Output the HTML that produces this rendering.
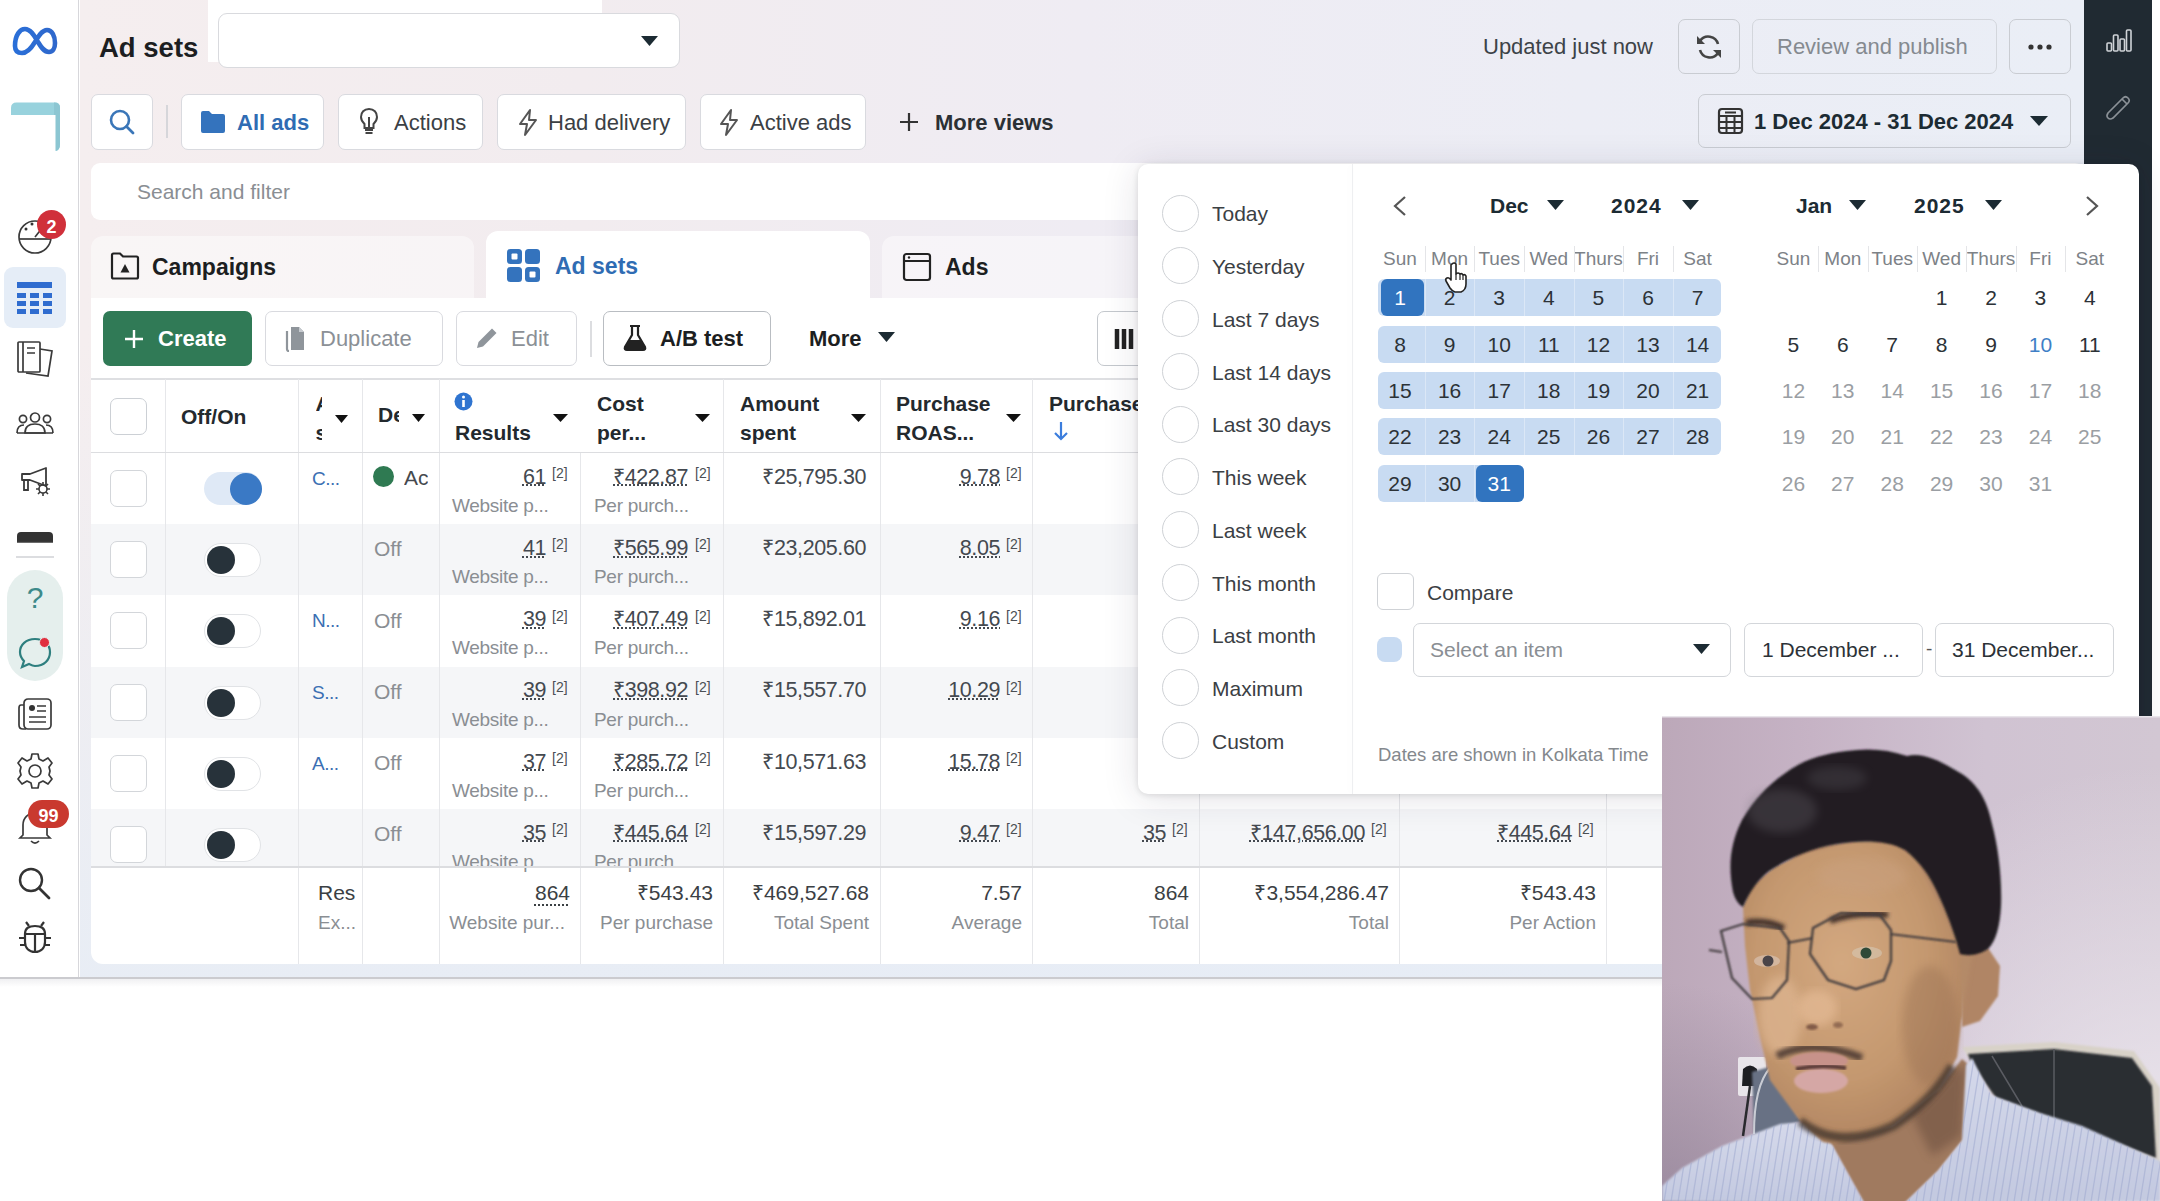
<!DOCTYPE html>
<html><head><meta charset="utf-8"><style>
*{box-sizing:border-box;margin:0;padding:0}
html,body{width:2160px;height:1201px;overflow:hidden;background:#fff;font-family:"Liberation Sans",sans-serif;color:#1c2b33}
.a{position:absolute}
.t{position:absolute;white-space:nowrap;line-height:1}
svg{position:absolute;overflow:visible}
.dot{text-decoration:underline dotted;text-underline-offset:3px;text-decoration-thickness:1.5px}
</style></head><body>
<div class="a" style="left:0px;top:0px;width:2160px;height:1201px;background:#fff"></div>
<div class="a" style="left:80px;top:0px;width:2004px;height:978px;background:linear-gradient(90deg,#f5eeef 0%,#f2ecef 25%,#efecf3 50%,#ecedf5 75%,#eaeef6 100%)"></div>
<div class="a" style="left:80px;top:0px;width:2004px;height:978px;background:linear-gradient(180deg,rgba(232,238,247,0) 0%,rgba(232,238,247,0) 35%,rgba(230,237,246,.85) 100%)"></div>
<div class="a" style="left:0px;top:0px;width:79px;height:978px;background:#fff;border-right:1.5px solid #d7d7db"></div>
<div class="a" style="left:2084px;top:0px;width:68px;height:978px;background:#202a32"></div>
<div class="a" style="left:0px;top:977px;width:2160px;height:2px;background:#cbcbcf"></div>
<div class="a" style="left:0px;top:979px;width:2160px;height:8px;background:linear-gradient(180deg,#f0f0f2,#fff)"></div>
<div class="t" style="left:99.0px;top:33.7px;font-size:27.5px;color:#1c1e21;font-weight:bold;">Ad sets</div>
<div class="a" style="left:208px;top:0px;width:394px;height:62px;background:#fff"></div>
<div class="a" style="left:218px;top:13px;width:462px;height:55px;background:#fff;border:1.5px solid #d9dade;border-radius:9px"></div>
<svg style="left:641px;top:36px;" width="17" height="11" viewBox="0 0 17 11"><path d="M0 0H17L8.5 10Z" fill="#1c2b33"/></svg>
<div class="a" style="left:91px;top:94px;width:62px;height:56px;background:#fff;border:1.5px solid #d9dadf;border-radius:7px"></div>
<svg style="left:108px;top:108px;" width="28" height="28" viewBox="0 0 28 28"><circle cx="12" cy="12" r="9" fill="none" stroke="#3a76b8" stroke-width="2.6"/><path d="M18.5 18.5L25 25" stroke="#3a76b8" stroke-width="2.8" stroke-linecap="round"/></svg>
<div class="a" style="left:166px;top:105px;width:2px;height:33px;background:#d6d6da"></div>
<div class="a" style="left:181px;top:94px;width:143px;height:56px;background:#fff;border:1.5px solid #d9dadf;border-radius:7px"></div>
<svg style="left:200px;top:110px;" width="26" height="24" viewBox="0 0 26 24"><path d="M1 3Q1 1 3 1H9L12 4H23Q25 4 25 6V21Q25 23 23 23H3Q1 23 1 21Z" fill="#3473bd"/></svg>
<div class="t" style="left:237.0px;top:112.4px;font-size:22px;color:#2f6cb3;font-weight:bold;">All ads</div>
<div class="a" style="left:338px;top:94px;width:145px;height:56px;background:#fff;border:1.5px solid #d9dadf;border-radius:7px"></div>
<svg style="left:358px;top:107px;" width="22" height="30" viewBox="0 0 22 30"><path d="M11 2C6 2 3 5.5 3 10C3 13 4.5 15 6.5 17V21H15.5V17C17.5 15 19 13 19 10C19 5.5 16 2 11 2Z" fill="none" stroke="#444" stroke-width="2"/><path d="M7 23H15M7.5 26H14.5M11 10V20" stroke="#444" stroke-width="2"/></svg>
<div class="t" style="left:394.0px;top:112.4px;font-size:22px;color:#3b4044;font-weight:normal;">Actions</div>
<div class="a" style="left:497px;top:94px;width:189px;height:56px;background:#fff;border:1.5px solid #d9dadf;border-radius:7px"></div>
<svg style="left:516px;top:108px;" width="24" height="30" viewBox="0 0 24 30"><path d="M14 2L4 16H11L9 27L20 12H13Z" fill="none" stroke="#555" stroke-width="2" stroke-linejoin="round"/></svg>
<div class="t" style="left:548.0px;top:112.4px;font-size:22px;color:#3b4044;font-weight:normal;">Had delivery</div>
<div class="a" style="left:700px;top:94px;width:166px;height:56px;background:#fff;border:1.5px solid #d9dadf;border-radius:7px"></div>
<svg style="left:717px;top:108px;" width="24" height="30" viewBox="0 0 24 30"><path d="M14 2L4 16H11L9 27L20 12H13Z" fill="none" stroke="#555" stroke-width="2" stroke-linejoin="round"/></svg>
<div class="t" style="left:750.0px;top:112.4px;font-size:22px;color:#3b4044;font-weight:normal;">Active ads</div>
<svg style="left:899px;top:112px;" width="20" height="20" viewBox="0 0 20 20"><path d="M10 1V19M1 10H19" stroke="#333" stroke-width="2.2"/></svg>
<div class="t" style="left:935.0px;top:112.4px;font-size:22px;color:#2b3035;font-weight:bold;">More views</div>
<div class="t" style="left:1483.0px;top:36.4px;font-size:22px;color:#3d4348;font-weight:normal;">Updated just now</div>
<div class="a" style="left:1678px;top:19px;width:62px;height:55px;background:#fff;border:1.5px solid #d9dadf;border-radius:7px;background:transparent;border-color:#c9ccd2"></div>
<svg style="left:1694px;top:33px;" width="30" height="28" viewBox="0 0 30 28"><path d="M24 11A10 10 0 0 0 6 8M6 17A10 10 0 0 0 24 20" fill="none" stroke="#444" stroke-width="2.6"/><path d="M3 3V11H11Z" fill="#444"/><path d="M27 25V17H19Z" fill="#444"/></svg>
<div class="a" style="left:1752px;top:19px;width:245px;height:55px;background:#fff;border:1.5px solid #d9dadf;border-radius:7px;background:transparent;border-color:#d3d6dc"></div>
<div class="t" style="left:1777.0px;top:36.4px;font-size:22px;color:#858a90;font-weight:normal;">Review and publish</div>
<div class="a" style="left:2009px;top:19px;width:62px;height:55px;background:#fff;border:1.5px solid #d9dadf;border-radius:7px;background:transparent;border-color:#c9ccd2"></div>
<svg style="left:2028px;top:43px;" width="26" height="8" viewBox="0 0 26 8"><circle cx="3" cy="4" r="2.6" fill="#333"/><circle cx="12" cy="4" r="2.6" fill="#333"/><circle cx="21" cy="4" r="2.6" fill="#333"/></svg>
<div class="a" style="left:1698px;top:94px;width:373px;height:54px;background:#fff;border:1.5px solid #d9dadf;border-radius:7px;background:transparent;border-color:#c9ccd2"></div>
<svg style="left:1717px;top:107px;" width="28" height="28" viewBox="0 0 28 28"><rect x="2" y="2" width="23" height="24" rx="3" fill="none" stroke="#333" stroke-width="2.2"/><path d="M2 9H25M2 15H25M2 21H25M9.5 9V26M17.5 9V26M8 5.5H19" stroke="#333" stroke-width="2"/></svg>
<div class="t" style="left:1754.0px;top:111.4px;font-size:22px;color:#1c2b33;font-weight:bold;">1 Dec 2024 - 31 Dec 2024</div>
<svg style="left:2030px;top:116px;" width="18" height="11" viewBox="0 0 18 11"><path d="M0 0H18L9 10Z" fill="#1c2b33"/></svg>
<svg style="left:2104px;top:28px;" width="30" height="26" viewBox="0 0 30 26"><g fill="none" stroke="#cfd3d7" stroke-width="1.6"><rect x="3" y="15" width="4.5" height="8" rx="1"/><rect x="9.5" y="7" width="4.5" height="16" rx="1"/><rect x="16" y="11" width="4.5" height="12" rx="1"/><rect x="22.5" y="2" width="4.5" height="21" rx="1"/></g></svg>
<svg style="left:2104px;top:91px;" width="28" height="28" viewBox="0 0 28 28"><path d="M4 22L19 7Q21.5 4.5 24 7Q26.5 9.5 24 12L9 27Q6 29 4 27Q2 25 4 22Z" fill="none" stroke="#8b9197" stroke-width="1.7"/><path d="M18 8L23 13" stroke="#8b9197" stroke-width="1.7"/></svg>
<div class="a" style="left:91px;top:163px;width:1993px;height:57px;background:#fff;border-radius:9px"></div>
<div class="t" style="left:137.0px;top:181.2px;font-size:21px;color:#8a8e93;font-weight:normal;">Search and filter</div>
<div class="a" style="left:91px;top:236px;width:383px;height:63px;background:rgba(255,255,255,.45);border-radius:12px 12px 0 0"></div>
<svg style="left:110px;top:252px;" width="30" height="28" viewBox="0 0 30 28"><path d="M2 3Q2 1.5 3.5 1.5H10L13 4.5H26.5Q28 4.5 28 6V25Q28 26.5 26.5 26.5H3.5Q2 26.5 2 25Z" fill="none" stroke="#222" stroke-width="2.2"/><path d="M10.5 20.5L15 12L19.5 20.5Z" fill="#222"/></svg>
<div class="t" style="left:152.0px;top:255.5px;font-size:23px;color:#1c1e21;font-weight:bold;">Campaigns</div>
<div class="a" style="left:486px;top:231px;width:384px;height:68px;background:#fff;border-radius:12px 12px 0 0"></div>
<svg style="left:506px;top:248px;" width="36" height="36" viewBox="0 0 36 36"><rect x="1" y="1" width="15" height="15" rx="3.5" fill="#3473bd"/><rect x="19" y="1" width="15" height="15" rx="3.5" fill="#3473bd"/><rect x="1" y="19" width="15" height="15" rx="3.5" fill="#3473bd"/><rect x="19" y="19" width="15" height="15" rx="3.5" fill="#3473bd"/><rect x="5.5" y="5.5" width="6" height="6" rx="1" fill="#fff"/><rect x="23.5" y="23.5" width="6" height="6" rx="1" fill="#fff"/></svg>
<div class="t" style="left:555.0px;top:254.5px;font-size:23px;color:#2f6cb3;font-weight:bold;">Ad sets</div>
<div class="a" style="left:882px;top:236px;width:1202px;height:63px;background:rgba(255,255,255,.45);border-radius:12px 12px 0 0"></div>
<svg style="left:902px;top:252px;" width="30" height="30" viewBox="0 0 30 30"><rect x="2" y="2" width="26" height="26" rx="2.5" fill="none" stroke="#222" stroke-width="2.2"/><path d="M2 9H28" stroke="#222" stroke-width="2"/><circle cx="7" cy="5.5" r="1.2" fill="#222"/></svg>
<div class="t" style="left:945.0px;top:255.5px;font-size:23px;color:#1c1e21;font-weight:bold;">Ads</div>
<div class="a" style="left:91px;top:298px;width:1993px;height:666px;background:#fff;border-radius:0 0 12px 12px"></div>
<div class="a" style="left:103px;top:311px;width:149px;height:55px;background:#307a56;border-radius:7px"></div>
<svg style="left:124px;top:329px;" width="20" height="20" viewBox="0 0 20 20"><path d="M10 1V19M1 10H19" stroke="#fff" stroke-width="2.4"/></svg>
<div class="t" style="left:158.0px;top:328.4px;font-size:22px;color:#fff;font-weight:bold;">Create</div>
<div class="a" style="left:265px;top:311px;width:178px;height:55px;background:#fff;border:1.5px solid #d9dadf;border-radius:7px"></div>
<svg style="left:282px;top:325px;" width="30" height="27" viewBox="0 0 30 27"><path d="M9 2H17L22 7V25H9Z" fill="#8f959b"/><path d="M5 6V24Q5 26 7 26" fill="none" stroke="#8f959b" stroke-width="2.2"/><path d="M17 2V7H22" fill="#c6cacf"/></svg>
<div class="t" style="left:320.0px;top:328.4px;font-size:22px;color:#8b9096;font-weight:normal;">Duplicate</div>
<div class="a" style="left:456px;top:311px;width:121px;height:55px;background:#fff;border:1.5px solid #d9dadf;border-radius:7px"></div>
<svg style="left:474px;top:325px;" width="26" height="26" viewBox="0 0 26 26"><path d="M3 23L4.5 17L18 3.5L22.5 8L9 21.5Z" fill="#8f959b"/></svg>
<div class="t" style="left:511.0px;top:328.4px;font-size:22px;color:#8b9096;font-weight:normal;">Edit</div>
<div class="a" style="left:590px;top:321px;width:2px;height:36px;background:#dcdde0"></div>
<div class="a" style="left:603px;top:311px;width:168px;height:55px;background:#fff;border:1.5px solid #b9bdc2;border-radius:7px"></div>
<svg style="left:622px;top:324px;" width="26" height="28" viewBox="0 0 26 28"><path d="M8 2H18M10 2V11L3 23Q2 26 5 26H21Q24 26 23 23L16 11V2" fill="none" stroke="#222" stroke-width="2.2"/><path d="M6.5 16H19.5L23 23Q24 26 21 26H5Q2 26 3 23Z" fill="#222"/></svg>
<div class="t" style="left:660.0px;top:328.4px;font-size:22px;color:#1c1e21;font-weight:bold;">A/B test</div>
<div class="t" style="left:809.0px;top:328.4px;font-size:22px;color:#1c1e21;font-weight:bold;">More</div>
<svg style="left:878px;top:332px;" width="17" height="11" viewBox="0 0 17 11"><path d="M0 0H17L8.5 10Z" fill="#1c2b33"/></svg>
<div class="a" style="left:1097px;top:311px;width:60px;height:55px;background:#fff;border:1.5px solid #d9dadf;border-radius:7px;border-color:#c4c8cd"></div>
<svg style="left:1115px;top:328px;" width="24" height="22" viewBox="0 0 24 22"><path d="M2 1V21M9 1V21M16 1V21" stroke="#222" stroke-width="4.5"/></svg>
<div class="a" style="left:91px;top:378px;width:1993px;height:1.5px;background:#dedfe2"></div>
<div class="a" style="left:91px;top:452px;width:1993px;height:1.5px;background:#dcdde0"></div>
<div class="a" style="left:165px;top:379px;width:1.2px;height:73px;background:#e6e7ea"></div>
<div class="a" style="left:298px;top:379px;width:1.2px;height:73px;background:#e6e7ea"></div>
<div class="a" style="left:362px;top:379px;width:1.2px;height:73px;background:#e6e7ea"></div>
<div class="a" style="left:439px;top:379px;width:1.2px;height:73px;background:#e6e7ea"></div>
<div class="a" style="left:723px;top:379px;width:1.2px;height:73px;background:#e6e7ea"></div>
<div class="a" style="left:880px;top:379px;width:1.2px;height:73px;background:#e6e7ea"></div>
<div class="a" style="left:1032px;top:379px;width:1.2px;height:73px;background:#e6e7ea"></div>
<div class="a" style="left:1199px;top:379px;width:1.2px;height:73px;background:#e6e7ea"></div>
<div class="a" style="left:1399px;top:379px;width:1.2px;height:73px;background:#e6e7ea"></div>
<div class="a" style="left:1606px;top:379px;width:1.2px;height:73px;background:#e6e7ea"></div>
<div class="a" style="left:110px;top:398px;width:37px;height:37px;background:#fff;border:1.5px solid #ccd0d5;border-radius:7px"></div>
<div class="t" style="left:181.0px;top:406.2px;font-size:21px;color:#23292e;font-weight:bold;">Off/On</div>
<div class="a" style="left:315.5px;top:388.8px;width:6px;height:56px;overflow:hidden"><div class="t" style="left:0;top:0;font-size:21px;font-weight:bold;color:#23292e;line-height:29px">Ad<br>set</div></div>
<svg style="left:335px;top:415px;" width="13" height="8" viewBox="0 0 13 8"><path d="M0 0H13L6.5 8Z" fill="#111"/></svg>
<div class="a" style="left:378px;top:400.4px;width:21px;height:30px;overflow:hidden"><div class="t" style="left:0;top:0;font-size:21px;font-weight:bold;color:#23292e;line-height:30px">Delivery</div></div>
<svg style="left:412px;top:414px;" width="13" height="8" viewBox="0 0 13 8"><path d="M0 0H13L6.5 8Z" fill="#111"/></svg>
<svg style="left:454px;top:392px;" width="19" height="19" viewBox="0 0 19 19"><circle cx="9.5" cy="9.5" r="9" fill="#2f74d0"/><rect x="8.2" y="8" width="2.6" height="7" fill="#fff"/><circle cx="9.5" cy="5" r="1.5" fill="#fff"/></svg>
<div class="t" style="left:455.0px;top:422.2px;font-size:21px;color:#23292e;font-weight:bold;">Results</div>
<svg style="left:553px;top:414px;" width="15" height="9" viewBox="0 0 15 9"><path d="M0 0H15L7.5 8Z" fill="#111"/></svg>
<div class="t" style="left:597.0px;top:393.2px;font-size:21px;color:#23292e;font-weight:bold;">Cost</div>
<div class="t" style="left:597.0px;top:422.2px;font-size:21px;color:#23292e;font-weight:bold;">per...</div>
<svg style="left:695px;top:414px;" width="15" height="9" viewBox="0 0 15 9"><path d="M0 0H15L7.5 8Z" fill="#111"/></svg>
<div class="t" style="left:740.0px;top:393.2px;font-size:21px;color:#23292e;font-weight:bold;">Amount</div>
<div class="t" style="left:740.0px;top:422.2px;font-size:21px;color:#23292e;font-weight:bold;">spent</div>
<svg style="left:851px;top:414px;" width="15" height="9" viewBox="0 0 15 9"><path d="M0 0H15L7.5 8Z" fill="#111"/></svg>
<div class="t" style="left:896.0px;top:393.2px;font-size:21px;color:#23292e;font-weight:bold;">Purchase</div>
<div class="t" style="left:896.0px;top:422.2px;font-size:21px;color:#23292e;font-weight:bold;">ROAS...</div>
<svg style="left:1006px;top:414px;" width="15" height="9" viewBox="0 0 15 9"><path d="M0 0H15L7.5 8Z" fill="#111"/></svg>
<div class="t" style="left:1049.0px;top:393.2px;font-size:21px;color:#23292e;font-weight:bold;">Purchases</div>
<svg style="left:1053px;top:421px;" width="16" height="20" viewBox="0 0 16 20"><path d="M8 1V18M2 12L8 18L14 12" fill="none" stroke="#3b7ddd" stroke-width="2.2"/></svg>
<div class="a" style="left:91px;top:453px;width:1993px;height:71px;background:#fff"></div>
<div class="a" style="left:165px;top:453px;width:1.2px;height:71px;background:#e6e7ea"></div>
<div class="a" style="left:298px;top:453px;width:1.2px;height:71px;background:#e6e7ea"></div>
<div class="a" style="left:362px;top:453px;width:1.2px;height:71px;background:#e6e7ea"></div>
<div class="a" style="left:439px;top:453px;width:1.2px;height:71px;background:#e6e7ea"></div>
<div class="a" style="left:580px;top:453px;width:1.2px;height:71px;background:#e6e7ea"></div>
<div class="a" style="left:723px;top:453px;width:1.2px;height:71px;background:#e6e7ea"></div>
<div class="a" style="left:880px;top:453px;width:1.2px;height:71px;background:#e6e7ea"></div>
<div class="a" style="left:1032px;top:453px;width:1.2px;height:71px;background:#e6e7ea"></div>
<div class="a" style="left:1199px;top:453px;width:1.2px;height:71px;background:#e6e7ea"></div>
<div class="a" style="left:1399px;top:453px;width:1.2px;height:71px;background:#e6e7ea"></div>
<div class="a" style="left:1606px;top:453px;width:1.2px;height:71px;background:#e6e7ea"></div>
<div class="a" style="left:110px;top:470px;width:37px;height:37px;background:#fff;border:1.5px solid #d3d6da;border-radius:7px"></div>
<div class="a" style="left:204px;top:472px;width:58px;height:33px;background:#dfe9f6;border-radius:17px"></div>
<div class="a" style="left:230px;top:473.0px;width:32px;height:32px;border-radius:50%;background:#3a79c5"></div>
<div class="a" style="left:373px;top:466.0px;width:21px;height:21px;border-radius:50%;background:#2f7a52"></div>
<div class="a" style="left:404px;top:463.0px;width:24px;height:30px;overflow:hidden"><div class="t" style="left:0;top:0;font-size:21px;color:#45494e;line-height:30px">Active</div></div>
<div class="t" style="left:312.0px;top:468.9px;font-size:19px;color:#3b6fb3;font-weight:normal;letter-spacing:-0.5px">C...</div>
<div class="t" style="right:1614.0px;top:466.8px;font-size:21.5px;color:#444950;font-weight:normal;letter-spacing:-0.4px;text-decoration:underline dotted 1.5px;text-underline-offset:1px">61</div>
<div class="t" style="left:552.0px;top:466.1px;font-size:14px;color:#4b4f54;font-weight:normal;">[2]</div>
<div class="t" style="left:452.0px;top:495.9px;font-size:19px;color:#8a8e93;font-weight:normal;letter-spacing:-0.3px">Website p...</div>
<div class="t" style="right:1472.0px;top:466.8px;font-size:21.5px;color:#444950;font-weight:normal;letter-spacing:-0.4px;text-decoration:underline dotted 1.5px;text-underline-offset:1px">₹422.87</div>
<div class="t" style="left:695.0px;top:466.1px;font-size:14px;color:#4b4f54;font-weight:normal;">[2]</div>
<div class="t" style="left:594.0px;top:495.9px;font-size:19px;color:#8a8e93;font-weight:normal;letter-spacing:-0.3px">Per purch...</div>
<div class="t" style="right:1294.0px;top:466.8px;font-size:21.5px;color:#444950;font-weight:normal;letter-spacing:-0.4px">₹25,795.30</div>
<div class="t" style="right:1160.0px;top:466.8px;font-size:21.5px;color:#444950;font-weight:normal;letter-spacing:-0.4px;text-decoration:underline dotted 1.5px;text-underline-offset:1px">9.78</div>
<div class="t" style="left:1006.0px;top:466.1px;font-size:14px;color:#4b4f54;font-weight:normal;">[2]</div>
<div class="a" style="left:91px;top:524px;width:1993px;height:71px;background:#f5f6f8"></div>
<div class="a" style="left:165px;top:524px;width:1.2px;height:71px;background:#e6e7ea"></div>
<div class="a" style="left:298px;top:524px;width:1.2px;height:71px;background:#e6e7ea"></div>
<div class="a" style="left:362px;top:524px;width:1.2px;height:71px;background:#e6e7ea"></div>
<div class="a" style="left:439px;top:524px;width:1.2px;height:71px;background:#e6e7ea"></div>
<div class="a" style="left:580px;top:524px;width:1.2px;height:71px;background:#e6e7ea"></div>
<div class="a" style="left:723px;top:524px;width:1.2px;height:71px;background:#e6e7ea"></div>
<div class="a" style="left:880px;top:524px;width:1.2px;height:71px;background:#e6e7ea"></div>
<div class="a" style="left:1032px;top:524px;width:1.2px;height:71px;background:#e6e7ea"></div>
<div class="a" style="left:1199px;top:524px;width:1.2px;height:71px;background:#e6e7ea"></div>
<div class="a" style="left:1399px;top:524px;width:1.2px;height:71px;background:#e6e7ea"></div>
<div class="a" style="left:1606px;top:524px;width:1.2px;height:71px;background:#e6e7ea"></div>
<div class="a" style="left:110px;top:541px;width:37px;height:37px;background:#fff;border:1.5px solid #d3d6da;border-radius:7px"></div>
<div class="a" style="left:204px;top:544px;width:0px;height:0px;"></div>
<div class="a" style="left:204px;top:543.2px;width:57px;height:34px;border-radius:17px;background:#fff;border:1.5px solid #e1e3e6"></div>
<div class="a" style="left:207px;top:546.2px;width:28px;height:28px;border-radius:50%;background:#27323a"></div>
<div class="t" style="left:374.0px;top:538.4px;font-size:21px;color:#8a8e93;font-weight:normal;">Off</div>
<div class="t" style="right:1614.0px;top:538.0px;font-size:21.5px;color:#444950;font-weight:normal;letter-spacing:-0.4px;text-decoration:underline dotted 1.5px;text-underline-offset:1px">41</div>
<div class="t" style="left:552.0px;top:537.3px;font-size:14px;color:#4b4f54;font-weight:normal;">[2]</div>
<div class="t" style="left:452.0px;top:567.1px;font-size:19px;color:#8a8e93;font-weight:normal;letter-spacing:-0.3px">Website p...</div>
<div class="t" style="right:1472.0px;top:538.0px;font-size:21.5px;color:#444950;font-weight:normal;letter-spacing:-0.4px;text-decoration:underline dotted 1.5px;text-underline-offset:1px">₹565.99</div>
<div class="t" style="left:695.0px;top:537.3px;font-size:14px;color:#4b4f54;font-weight:normal;">[2]</div>
<div class="t" style="left:594.0px;top:567.1px;font-size:19px;color:#8a8e93;font-weight:normal;letter-spacing:-0.3px">Per purch...</div>
<div class="t" style="right:1294.0px;top:538.0px;font-size:21.5px;color:#444950;font-weight:normal;letter-spacing:-0.4px">₹23,205.60</div>
<div class="t" style="right:1160.0px;top:538.0px;font-size:21.5px;color:#444950;font-weight:normal;letter-spacing:-0.4px;text-decoration:underline dotted 1.5px;text-underline-offset:1px">8.05</div>
<div class="t" style="left:1006.0px;top:537.3px;font-size:14px;color:#4b4f54;font-weight:normal;">[2]</div>
<div class="a" style="left:91px;top:595px;width:1993px;height:72px;background:#fff"></div>
<div class="a" style="left:165px;top:595px;width:1.2px;height:72px;background:#e6e7ea"></div>
<div class="a" style="left:298px;top:595px;width:1.2px;height:72px;background:#e6e7ea"></div>
<div class="a" style="left:362px;top:595px;width:1.2px;height:72px;background:#e6e7ea"></div>
<div class="a" style="left:439px;top:595px;width:1.2px;height:72px;background:#e6e7ea"></div>
<div class="a" style="left:580px;top:595px;width:1.2px;height:72px;background:#e6e7ea"></div>
<div class="a" style="left:723px;top:595px;width:1.2px;height:72px;background:#e6e7ea"></div>
<div class="a" style="left:880px;top:595px;width:1.2px;height:72px;background:#e6e7ea"></div>
<div class="a" style="left:1032px;top:595px;width:1.2px;height:72px;background:#e6e7ea"></div>
<div class="a" style="left:1199px;top:595px;width:1.2px;height:72px;background:#e6e7ea"></div>
<div class="a" style="left:1399px;top:595px;width:1.2px;height:72px;background:#e6e7ea"></div>
<div class="a" style="left:1606px;top:595px;width:1.2px;height:72px;background:#e6e7ea"></div>
<div class="a" style="left:110px;top:612px;width:37px;height:37px;background:#fff;border:1.5px solid #d3d6da;border-radius:7px"></div>
<div class="a" style="left:204px;top:616px;width:0px;height:0px;"></div>
<div class="a" style="left:204px;top:614.4px;width:57px;height:34px;border-radius:17px;background:#fff;border:1.5px solid #e1e3e6"></div>
<div class="a" style="left:207px;top:617.4px;width:28px;height:28px;border-radius:50%;background:#27323a"></div>
<div class="t" style="left:374.0px;top:609.6px;font-size:21px;color:#8a8e93;font-weight:normal;">Off</div>
<div class="t" style="left:312.0px;top:611.3px;font-size:19px;color:#3b6fb3;font-weight:normal;letter-spacing:-0.5px">N...</div>
<div class="t" style="right:1614.0px;top:609.2px;font-size:21.5px;color:#444950;font-weight:normal;letter-spacing:-0.4px;text-decoration:underline dotted 1.5px;text-underline-offset:1px">39</div>
<div class="t" style="left:552.0px;top:608.5px;font-size:14px;color:#4b4f54;font-weight:normal;">[2]</div>
<div class="t" style="left:452.0px;top:638.3px;font-size:19px;color:#8a8e93;font-weight:normal;letter-spacing:-0.3px">Website p...</div>
<div class="t" style="right:1472.0px;top:609.2px;font-size:21.5px;color:#444950;font-weight:normal;letter-spacing:-0.4px;text-decoration:underline dotted 1.5px;text-underline-offset:1px">₹407.49</div>
<div class="t" style="left:695.0px;top:608.5px;font-size:14px;color:#4b4f54;font-weight:normal;">[2]</div>
<div class="t" style="left:594.0px;top:638.3px;font-size:19px;color:#8a8e93;font-weight:normal;letter-spacing:-0.3px">Per purch...</div>
<div class="t" style="right:1294.0px;top:609.2px;font-size:21.5px;color:#444950;font-weight:normal;letter-spacing:-0.4px">₹15,892.01</div>
<div class="t" style="right:1160.0px;top:609.2px;font-size:21.5px;color:#444950;font-weight:normal;letter-spacing:-0.4px;text-decoration:underline dotted 1.5px;text-underline-offset:1px">9.16</div>
<div class="t" style="left:1006.0px;top:608.5px;font-size:14px;color:#4b4f54;font-weight:normal;">[2]</div>
<div class="a" style="left:91px;top:667px;width:1993px;height:71px;background:#f5f6f8"></div>
<div class="a" style="left:165px;top:667px;width:1.2px;height:71px;background:#e6e7ea"></div>
<div class="a" style="left:298px;top:667px;width:1.2px;height:71px;background:#e6e7ea"></div>
<div class="a" style="left:362px;top:667px;width:1.2px;height:71px;background:#e6e7ea"></div>
<div class="a" style="left:439px;top:667px;width:1.2px;height:71px;background:#e6e7ea"></div>
<div class="a" style="left:580px;top:667px;width:1.2px;height:71px;background:#e6e7ea"></div>
<div class="a" style="left:723px;top:667px;width:1.2px;height:71px;background:#e6e7ea"></div>
<div class="a" style="left:880px;top:667px;width:1.2px;height:71px;background:#e6e7ea"></div>
<div class="a" style="left:1032px;top:667px;width:1.2px;height:71px;background:#e6e7ea"></div>
<div class="a" style="left:1199px;top:667px;width:1.2px;height:71px;background:#e6e7ea"></div>
<div class="a" style="left:1399px;top:667px;width:1.2px;height:71px;background:#e6e7ea"></div>
<div class="a" style="left:1606px;top:667px;width:1.2px;height:71px;background:#e6e7ea"></div>
<div class="a" style="left:110px;top:684px;width:37px;height:37px;background:#fff;border:1.5px solid #d3d6da;border-radius:7px"></div>
<div class="a" style="left:204px;top:687px;width:0px;height:0px;"></div>
<div class="a" style="left:204px;top:685.6px;width:57px;height:34px;border-radius:17px;background:#fff;border:1.5px solid #e1e3e6"></div>
<div class="a" style="left:207px;top:688.6px;width:28px;height:28px;border-radius:50%;background:#27323a"></div>
<div class="t" style="left:374.0px;top:680.8px;font-size:21px;color:#8a8e93;font-weight:normal;">Off</div>
<div class="t" style="left:312.0px;top:682.5px;font-size:19px;color:#3b6fb3;font-weight:normal;letter-spacing:-0.5px">S...</div>
<div class="t" style="right:1614.0px;top:680.4px;font-size:21.5px;color:#444950;font-weight:normal;letter-spacing:-0.4px;text-decoration:underline dotted 1.5px;text-underline-offset:1px">39</div>
<div class="t" style="left:552.0px;top:679.7px;font-size:14px;color:#4b4f54;font-weight:normal;">[2]</div>
<div class="t" style="left:452.0px;top:709.5px;font-size:19px;color:#8a8e93;font-weight:normal;letter-spacing:-0.3px">Website p...</div>
<div class="t" style="right:1472.0px;top:680.4px;font-size:21.5px;color:#444950;font-weight:normal;letter-spacing:-0.4px;text-decoration:underline dotted 1.5px;text-underline-offset:1px">₹398.92</div>
<div class="t" style="left:695.0px;top:679.7px;font-size:14px;color:#4b4f54;font-weight:normal;">[2]</div>
<div class="t" style="left:594.0px;top:709.5px;font-size:19px;color:#8a8e93;font-weight:normal;letter-spacing:-0.3px">Per purch...</div>
<div class="t" style="right:1294.0px;top:680.4px;font-size:21.5px;color:#444950;font-weight:normal;letter-spacing:-0.4px">₹15,557.70</div>
<div class="t" style="right:1160.0px;top:680.4px;font-size:21.5px;color:#444950;font-weight:normal;letter-spacing:-0.4px;text-decoration:underline dotted 1.5px;text-underline-offset:1px">10.29</div>
<div class="t" style="left:1006.0px;top:679.7px;font-size:14px;color:#4b4f54;font-weight:normal;">[2]</div>
<div class="a" style="left:91px;top:738px;width:1993px;height:71px;background:#fff"></div>
<div class="a" style="left:165px;top:738px;width:1.2px;height:71px;background:#e6e7ea"></div>
<div class="a" style="left:298px;top:738px;width:1.2px;height:71px;background:#e6e7ea"></div>
<div class="a" style="left:362px;top:738px;width:1.2px;height:71px;background:#e6e7ea"></div>
<div class="a" style="left:439px;top:738px;width:1.2px;height:71px;background:#e6e7ea"></div>
<div class="a" style="left:580px;top:738px;width:1.2px;height:71px;background:#e6e7ea"></div>
<div class="a" style="left:723px;top:738px;width:1.2px;height:71px;background:#e6e7ea"></div>
<div class="a" style="left:880px;top:738px;width:1.2px;height:71px;background:#e6e7ea"></div>
<div class="a" style="left:1032px;top:738px;width:1.2px;height:71px;background:#e6e7ea"></div>
<div class="a" style="left:1199px;top:738px;width:1.2px;height:71px;background:#e6e7ea"></div>
<div class="a" style="left:1399px;top:738px;width:1.2px;height:71px;background:#e6e7ea"></div>
<div class="a" style="left:1606px;top:738px;width:1.2px;height:71px;background:#e6e7ea"></div>
<div class="a" style="left:110px;top:755px;width:37px;height:37px;background:#fff;border:1.5px solid #d3d6da;border-radius:7px"></div>
<div class="a" style="left:204px;top:758px;width:0px;height:0px;"></div>
<div class="a" style="left:204px;top:756.8px;width:57px;height:34px;border-radius:17px;background:#fff;border:1.5px solid #e1e3e6"></div>
<div class="a" style="left:207px;top:759.8px;width:28px;height:28px;border-radius:50%;background:#27323a"></div>
<div class="t" style="left:374.0px;top:752.0px;font-size:21px;color:#8a8e93;font-weight:normal;">Off</div>
<div class="t" style="left:312.0px;top:753.7px;font-size:19px;color:#3b6fb3;font-weight:normal;letter-spacing:-0.5px">A...</div>
<div class="t" style="right:1614.0px;top:751.6px;font-size:21.5px;color:#444950;font-weight:normal;letter-spacing:-0.4px;text-decoration:underline dotted 1.5px;text-underline-offset:1px">37</div>
<div class="t" style="left:552.0px;top:750.9px;font-size:14px;color:#4b4f54;font-weight:normal;">[2]</div>
<div class="t" style="left:452.0px;top:780.7px;font-size:19px;color:#8a8e93;font-weight:normal;letter-spacing:-0.3px">Website p...</div>
<div class="t" style="right:1472.0px;top:751.6px;font-size:21.5px;color:#444950;font-weight:normal;letter-spacing:-0.4px;text-decoration:underline dotted 1.5px;text-underline-offset:1px">₹285.72</div>
<div class="t" style="left:695.0px;top:750.9px;font-size:14px;color:#4b4f54;font-weight:normal;">[2]</div>
<div class="t" style="left:594.0px;top:780.7px;font-size:19px;color:#8a8e93;font-weight:normal;letter-spacing:-0.3px">Per purch...</div>
<div class="t" style="right:1294.0px;top:751.6px;font-size:21.5px;color:#444950;font-weight:normal;letter-spacing:-0.4px">₹10,571.63</div>
<div class="t" style="right:1160.0px;top:751.6px;font-size:21.5px;color:#444950;font-weight:normal;letter-spacing:-0.4px;text-decoration:underline dotted 1.5px;text-underline-offset:1px">15.78</div>
<div class="t" style="left:1006.0px;top:750.9px;font-size:14px;color:#4b4f54;font-weight:normal;">[2]</div>
<div class="a" style="left:91px;top:809px;width:1993px;height:57px;background:#f5f6f8"></div>
<div class="a" style="left:165px;top:809px;width:1.2px;height:57px;background:#e6e7ea"></div>
<div class="a" style="left:298px;top:809px;width:1.2px;height:57px;background:#e6e7ea"></div>
<div class="a" style="left:362px;top:809px;width:1.2px;height:57px;background:#e6e7ea"></div>
<div class="a" style="left:439px;top:809px;width:1.2px;height:57px;background:#e6e7ea"></div>
<div class="a" style="left:580px;top:809px;width:1.2px;height:57px;background:#e6e7ea"></div>
<div class="a" style="left:723px;top:809px;width:1.2px;height:57px;background:#e6e7ea"></div>
<div class="a" style="left:880px;top:809px;width:1.2px;height:57px;background:#e6e7ea"></div>
<div class="a" style="left:1032px;top:809px;width:1.2px;height:57px;background:#e6e7ea"></div>
<div class="a" style="left:1199px;top:809px;width:1.2px;height:57px;background:#e6e7ea"></div>
<div class="a" style="left:1399px;top:809px;width:1.2px;height:57px;background:#e6e7ea"></div>
<div class="a" style="left:1606px;top:809px;width:1.2px;height:57px;background:#e6e7ea"></div>
<div class="a" style="left:110px;top:826px;width:37px;height:37px;background:#fff;border:1.5px solid #d3d6da;border-radius:7px"></div>
<div class="a" style="left:204px;top:829px;width:0px;height:0px;"></div>
<div class="a" style="left:204px;top:828.0px;width:57px;height:34px;border-radius:17px;background:#fff;border:1.5px solid #e1e3e6"></div>
<div class="a" style="left:207px;top:831.0px;width:28px;height:28px;border-radius:50%;background:#27323a"></div>
<div class="t" style="left:374.0px;top:823.2px;font-size:21px;color:#8a8e93;font-weight:normal;">Off</div>
<div class="t" style="right:1614.0px;top:822.8px;font-size:21.5px;color:#444950;font-weight:normal;letter-spacing:-0.4px;text-decoration:underline dotted 1.5px;text-underline-offset:1px">35</div>
<div class="t" style="left:552.0px;top:822.1px;font-size:14px;color:#4b4f54;font-weight:normal;">[2]</div>
<div class="t" style="left:452.0px;top:851.9px;font-size:19px;color:#8a8e93;font-weight:normal;letter-spacing:-0.3px">Website p...</div>
<div class="t" style="right:1472.0px;top:822.8px;font-size:21.5px;color:#444950;font-weight:normal;letter-spacing:-0.4px;text-decoration:underline dotted 1.5px;text-underline-offset:1px">₹445.64</div>
<div class="t" style="left:695.0px;top:822.1px;font-size:14px;color:#4b4f54;font-weight:normal;">[2]</div>
<div class="t" style="left:594.0px;top:851.9px;font-size:19px;color:#8a8e93;font-weight:normal;letter-spacing:-0.3px">Per purch...</div>
<div class="t" style="right:1294.0px;top:822.8px;font-size:21.5px;color:#444950;font-weight:normal;letter-spacing:-0.4px">₹15,597.29</div>
<div class="t" style="right:1160.0px;top:822.8px;font-size:21.5px;color:#444950;font-weight:normal;letter-spacing:-0.4px;text-decoration:underline dotted 1.5px;text-underline-offset:1px">9.47</div>
<div class="t" style="left:1006.0px;top:822.1px;font-size:14px;color:#4b4f54;font-weight:normal;">[2]</div>
<div class="t" style="right:994.0px;top:822.8px;font-size:21.5px;color:#444950;font-weight:normal;letter-spacing:-0.4px;text-decoration:underline dotted 1.5px;text-underline-offset:1px">35</div>
<div class="t" style="left:1172.0px;top:822.1px;font-size:14px;color:#4b4f54;font-weight:normal;">[2]</div>
<div class="t" style="right:795.0px;top:822.8px;font-size:21.5px;color:#444950;font-weight:normal;letter-spacing:-0.4px;text-decoration:underline dotted 1.5px;text-underline-offset:1px">₹147,656.00</div>
<div class="t" style="left:1371.0px;top:822.1px;font-size:14px;color:#4b4f54;font-weight:normal;">[2]</div>
<div class="t" style="right:588.0px;top:822.8px;font-size:21.5px;color:#444950;font-weight:normal;letter-spacing:-0.4px;text-decoration:underline dotted 1.5px;text-underline-offset:1px">₹445.64</div>
<div class="t" style="left:1578.0px;top:822.1px;font-size:14px;color:#4b4f54;font-weight:normal;">[2]</div>
<div class="a" style="left:91px;top:866px;width:1993px;height:2px;background:#dcdde0"></div>
<div class="a" style="left:298px;top:868px;width:1.2px;height:96px;background:#e6e7ea"></div>
<div class="a" style="left:362px;top:868px;width:1.2px;height:96px;background:#e6e7ea"></div>
<div class="a" style="left:439px;top:868px;width:1.2px;height:96px;background:#e6e7ea"></div>
<div class="a" style="left:580px;top:868px;width:1.2px;height:96px;background:#e6e7ea"></div>
<div class="a" style="left:723px;top:868px;width:1.2px;height:96px;background:#e6e7ea"></div>
<div class="a" style="left:880px;top:868px;width:1.2px;height:96px;background:#e6e7ea"></div>
<div class="a" style="left:1032px;top:868px;width:1.2px;height:96px;background:#e6e7ea"></div>
<div class="a" style="left:1199px;top:868px;width:1.2px;height:96px;background:#e6e7ea"></div>
<div class="a" style="left:1399px;top:868px;width:1.2px;height:96px;background:#e6e7ea"></div>
<div class="a" style="left:1606px;top:868px;width:1.2px;height:96px;background:#e6e7ea"></div>
<div class="t" style="left:318.0px;top:882.2px;font-size:21px;color:#3b4044;font-weight:normal;">Res</div>
<div class="t" style="left:318.0px;top:912.9px;font-size:19px;color:#8a8e93;font-weight:normal;">Ex...</div>
<div class="t" style="right:1590.0px;top:882.2px;font-size:21px;color:#3b4044;font-weight:normal;text-decoration:underline dotted 1.5px;text-underline-offset:4px">864</div>
<div class="t" style="right:1595.0px;top:912.9px;font-size:19px;color:#8a8e93;font-weight:normal;">Website pur...</div>
<div class="t" style="right:1447.0px;top:882.2px;font-size:21px;color:#3b4044;font-weight:normal;">₹543.43</div>
<div class="t" style="right:1447.0px;top:912.9px;font-size:19px;color:#8a8e93;font-weight:normal;">Per purchase</div>
<div class="t" style="right:1291.0px;top:882.2px;font-size:21px;color:#3b4044;font-weight:normal;">₹469,527.68</div>
<div class="t" style="right:1291.0px;top:912.9px;font-size:19px;color:#8a8e93;font-weight:normal;">Total Spent</div>
<div class="t" style="right:1138.0px;top:882.2px;font-size:21px;color:#3b4044;font-weight:normal;">7.57</div>
<div class="t" style="right:1138.0px;top:912.9px;font-size:19px;color:#8a8e93;font-weight:normal;">Average</div>
<div class="t" style="right:971.0px;top:882.2px;font-size:21px;color:#3b4044;font-weight:normal;">864</div>
<div class="t" style="right:971.0px;top:912.9px;font-size:19px;color:#8a8e93;font-weight:normal;">Total</div>
<div class="t" style="right:771.0px;top:882.2px;font-size:21px;color:#3b4044;font-weight:normal;">₹3,554,286.47</div>
<div class="t" style="right:771.0px;top:912.9px;font-size:19px;color:#8a8e93;font-weight:normal;">Total</div>
<div class="t" style="right:564.0px;top:882.2px;font-size:21px;color:#3b4044;font-weight:normal;">₹543.43</div>
<div class="t" style="right:564.0px;top:912.9px;font-size:19px;color:#8a8e93;font-weight:normal;">Per Action</div>
<svg style="left:10px;top:24px;" width="50" height="34" viewBox="0 0 50 34"><defs><linearGradient id="mg" x1="0" x2="1"><stop offset="0" stop-color="#2a6fd8"/><stop offset="1" stop-color="#2f68cc"/></linearGradient></defs><path d="M5 22C5 11 10 5 15 5C21 5 25 13 28 18C31 23 34 28 39 28C43 28 45 24 45 19C45 12 42 6 37 6C32 6 28 13 25 18C22 23 18 29 12 29C7 29 5 26 5 22Z" fill="none" stroke="url(#mg)" stroke-width="4.6" stroke-linejoin="round"/></svg>
<svg style="left:10px;top:102px;" width="52" height="50" viewBox="0 0 52 50"><path d="M1 6Q1 0.5 6.5 0.5H45Q50 0.5 50 5.5V42Q50 48 46 49V13H1Z" fill="#98d2dd"/><path d="M44 0.5Q50 0.5 50 6V42Q50 48 45.5 49V13H44Z" fill="#8cc6d2"/></svg>
<svg style="left:16px;top:216px;" width="38" height="38" viewBox="0 0 38 38"><path d="M3 21A16 16 0 1 1 35 21A16 16 0 0 1 3 21Z" fill="none" stroke="#3a3a3a" stroke-width="1.7"/><path d="M3 23H35" stroke="#3a3a3a" stroke-width="1.7"/><circle cx="10" cy="13" r="1.5" fill="#333"/><circle cx="16" cy="8" r="1.5" fill="#333"/><path d="M19 21L27 11" stroke="#3a3a3a" stroke-width="1.7"/></svg>
<div class="a" style="left:37px;top:210px;width:29px;height:29px;border-radius:50%;background:#d0303a"></div>
<div class="t" style="left:51.5px;transform:translateX(-50%);top:217.8px;font-size:18px;color:#fff;font-weight:bold;">2</div>
<div class="a" style="left:4px;top:267px;width:62px;height:61px;background:#e5edf7;border-radius:9px"></div>
<svg style="left:17px;top:282px;" width="36" height="32" viewBox="0 0 36 32"><rect x="0" y="0" width="35" height="6" fill="#2f6ccf"/><g fill="#2f6ccf"><rect x="0" y="11" width="9" height="5"/><rect x="13" y="11" width="9" height="5"/><rect x="26" y="11" width="9" height="5"/><rect x="0" y="19" width="9" height="5"/><rect x="13" y="19" width="9" height="5"/><rect x="26" y="19" width="9" height="5"/><rect x="0" y="27" width="9" height="5"/><rect x="13" y="27" width="9" height="5"/><rect x="26" y="27" width="9" height="5"/></g></svg>
<svg style="left:16px;top:340px;" width="38" height="38" viewBox="0 0 38 38"><rect x="2" y="2" width="22" height="30" rx="1" fill="none" stroke="#3a3a3a" stroke-width="1.7"/><path d="M7 2V32M11 8H19M11 13H19" stroke="#3a3a3a" stroke-width="1.7"/><path d="M24 9L36 11L32 36L10 33" fill="none" stroke="#3a3a3a" stroke-width="1.7"/></svg>
<svg style="left:15px;top:412px;" width="40" height="24" viewBox="0 0 40 24"><circle cx="20" cy="5.5" r="4.5" fill="none" stroke="#3a3a3a" stroke-width="1.7"/><circle cx="8" cy="7" r="3.6" fill="none" stroke="#3a3a3a" stroke-width="1.7"/><circle cx="32" cy="7" r="3.6" fill="none" stroke="#3a3a3a" stroke-width="1.7"/><path d="M10 21C10 15 14 12 20 12C26 12 30 15 30 21Z" fill="#fff" stroke="#3a3a3a" stroke-width="1.7"/><path d="M2 21C2 16 4.5 13 9 13M38 21C38 16 35.5 13 31 13M2 21H38" fill="none" stroke="#3a3a3a" stroke-width="1.7"/></svg>
<svg style="left:18px;top:466px;" width="34" height="32" viewBox="0 0 34 32"><path d="M4 8H12L28 2V20L12 14H4Z" fill="none" stroke="#3a3a3a" stroke-width="1.8" stroke-linejoin="round"/><path d="M6 14V24H10V15" fill="none" stroke="#3a3a3a" stroke-width="1.8"/><g transform="translate(25 23)"><circle r="4" fill="none" stroke="#3a3a3a" stroke-width="1.6"/><path d="M0 -7V-4M0 4V7M-7 0H-4M4 0H7M-5 -5L-3 -3M3 3L5 5M-5 5L-3 3M3 -3L5 -5" stroke="#3a3a3a" stroke-width="1.6"/></g></svg>
<svg style="left:15px;top:528px;" width="40" height="20" viewBox="0 0 40 20"><path d="M2 14V8Q2 4 6 4H34Q38 4 38 8V14Z" fill="#333"/><path d="M2 14H38" stroke="#3a3a3a" stroke-width="1.7"/></svg>
<div class="a" style="left:16px;top:556px;width:38px;height:1.5px;background:#dcdde0"></div>
<div class="a" style="left:7px;top:570px;width:56px;height:111px;background:#e5efed;border-radius:28px"></div>
<div class="t" style="left:35.0px;transform:translateX(-50%);top:582.6px;font-size:30px;color:#3d8a8a;font-weight:normal;">?</div>
<svg style="left:18px;top:636px;" width="36" height="34" viewBox="0 0 36 34"><path d="M17 3C8 3 2 9 2 16C2 20 4 23 6 25L4 31L11 28C13 29 15 30 17 30C26 30 32 24 32 16C32 9 26 3 17 3Z" fill="none" stroke="#2e7f7f" stroke-width="2.2"/></svg>
<div class="a" style="left:39px;top:637px;width:11px;height:11px;border-radius:50%;background:#e03040;border:1.5px solid #e5efed"></div>
<svg style="left:17px;top:697px;" width="36" height="34" viewBox="0 0 36 34"><rect x="7" y="2" width="27" height="30" rx="4" fill="none" stroke="#3a3a3a" stroke-width="1.7"/><path d="M7 8H4Q2 8 2 11V28Q2 32 6 32H9" fill="none" stroke="#3a3a3a" stroke-width="1.7"/><circle cx="15" cy="11" r="3" fill="#333"/><path d="M20 9H29M20 14H29M12 20H29M12 25H29" stroke="#3a3a3a" stroke-width="1.7"/></svg>
<svg style="left:16px;top:752px;" width="38" height="38" viewBox="0 0 38 38"><circle cx="19" cy="19" r="6" fill="none" stroke="#3a3a3a" stroke-width="1.7"/><path d="M16 2H22L23 7L27 9L32 6L36 11L33 15L34 19L33 23L36 27L32 32L27 29L23 31L22 36H16L15 31L11 29L6 32L2 27L5 23L4 19L5 15L2 11L6 6L11 9L15 7Z" fill="none" stroke="#3a3a3a" stroke-width="1.7" stroke-linejoin="round"/></svg>
<svg style="left:17px;top:808px;" width="36" height="36" viewBox="0 0 36 36"><path d="M6 27V17C6 10 11 5 18 5C25 5 30 10 30 17V27L33 30H3Z" fill="none" stroke="#3a3a3a" stroke-width="1.7"/><path d="M14 33Q18 37 22 33" fill="none" stroke="#3a3a3a" stroke-width="1.7"/></svg>
<div class="a" style="left:28px;top:800px;width:41px;height:28px;border-radius:14px;background:#c9392f"></div>
<div class="t" style="left:48.5px;transform:translateX(-50%);top:806.8px;font-size:18px;color:#fff;font-weight:bold;">99</div>
<svg style="left:17px;top:866px;" width="36" height="36" viewBox="0 0 36 36"><circle cx="14" cy="14" r="11" fill="none" stroke="#333" stroke-width="2.4"/><path d="M22 22L32 32" stroke="#333" stroke-width="2.8" stroke-linecap="round"/></svg>
<svg style="left:17px;top:920px;" width="36" height="36" viewBox="0 0 36 36"><path d="M8 14C8 8 12 6 18 6C24 6 28 8 28 14V22C28 28 24 32 18 32C12 32 8 28 8 22Z" fill="none" stroke="#333" stroke-width="2.2"/><path d="M8 14H28M18 14V32M12 6L9 2M24 6L27 2M8 18H2M28 18H34M8 25H3M28 25H33" stroke="#333" stroke-width="2.2"/></svg>
<div class="a" style="left:1138px;top:164px;width:1001px;height:630px;background:#fff;border-radius:10px;box-shadow:0 4px 36px rgba(40,30,60,.13),0 1px 6px rgba(0,0,0,.12)"></div>
<div class="a" style="left:1352px;top:164px;width:1px;height:630px;background:#eeeff1;box-shadow:-2px 0 6px rgba(0,0,0,.05)"></div>
<div class="a" style="left:1162px;top:194.5px;width:37px;height:37px;border-radius:50%;border:1.5px solid #cfd2d6"></div>
<div class="t" style="left:1212.0px;top:203.2px;font-size:21px;color:#3b4044;font-weight:normal;">Today</div>
<div class="a" style="left:1162px;top:247.2px;width:37px;height:37px;border-radius:50%;border:1.5px solid #cfd2d6"></div>
<div class="t" style="left:1212.0px;top:256.0px;font-size:21px;color:#3b4044;font-weight:normal;">Yesterday</div>
<div class="a" style="left:1162px;top:300.0px;width:37px;height:37px;border-radius:50%;border:1.5px solid #cfd2d6"></div>
<div class="t" style="left:1212.0px;top:308.7px;font-size:21px;color:#3b4044;font-weight:normal;">Last 7 days</div>
<div class="a" style="left:1162px;top:352.8px;width:37px;height:37px;border-radius:50%;border:1.5px solid #cfd2d6"></div>
<div class="t" style="left:1212.0px;top:361.5px;font-size:21px;color:#3b4044;font-weight:normal;">Last 14 days</div>
<div class="a" style="left:1162px;top:405.5px;width:37px;height:37px;border-radius:50%;border:1.5px solid #cfd2d6"></div>
<div class="t" style="left:1212.0px;top:414.2px;font-size:21px;color:#3b4044;font-weight:normal;">Last 30 days</div>
<div class="a" style="left:1162px;top:458.2px;width:37px;height:37px;border-radius:50%;border:1.5px solid #cfd2d6"></div>
<div class="t" style="left:1212.0px;top:467.0px;font-size:21px;color:#3b4044;font-weight:normal;">This week</div>
<div class="a" style="left:1162px;top:511.0px;width:37px;height:37px;border-radius:50%;border:1.5px solid #cfd2d6"></div>
<div class="t" style="left:1212.0px;top:519.7px;font-size:21px;color:#3b4044;font-weight:normal;">Last week</div>
<div class="a" style="left:1162px;top:563.8px;width:37px;height:37px;border-radius:50%;border:1.5px solid #cfd2d6"></div>
<div class="t" style="left:1212.0px;top:572.5px;font-size:21px;color:#3b4044;font-weight:normal;">This month</div>
<div class="a" style="left:1162px;top:616.5px;width:37px;height:37px;border-radius:50%;border:1.5px solid #cfd2d6"></div>
<div class="t" style="left:1212.0px;top:625.2px;font-size:21px;color:#3b4044;font-weight:normal;">Last month</div>
<div class="a" style="left:1162px;top:669.2px;width:37px;height:37px;border-radius:50%;border:1.5px solid #cfd2d6"></div>
<div class="t" style="left:1212.0px;top:678.0px;font-size:21px;color:#3b4044;font-weight:normal;">Maximum</div>
<div class="a" style="left:1162px;top:722.0px;width:37px;height:37px;border-radius:50%;border:1.5px solid #cfd2d6"></div>
<div class="t" style="left:1212.0px;top:730.7px;font-size:21px;color:#3b4044;font-weight:normal;">Custom</div>
<svg style="left:1392px;top:195px;" width="16" height="22" viewBox="0 0 16 22"><path d="M13 2L3 11L13 20" fill="none" stroke="#555" stroke-width="2.2"/></svg>
<svg style="left:2084px;top:195px;" width="16" height="22" viewBox="0 0 16 22"><path d="M3 2L13 11L3 20" fill="none" stroke="#555" stroke-width="2.2"/></svg>
<div class="t" style="left:1490.0px;top:195.2px;font-size:21px;color:#1c2b33;font-weight:bold;">Dec</div>
<svg style="left:1547px;top:200px;" width="17" height="10" viewBox="0 0 17 10"><path d="M0 0H17L8.5 10Z" fill="#1c2b33"/></svg>
<div class="t" style="left:1611.0px;top:195.2px;font-size:21px;color:#1c2b33;font-weight:bold;letter-spacing:1px">2024</div>
<svg style="left:1682px;top:200px;" width="17" height="10" viewBox="0 0 17 10"><path d="M0 0H17L8.5 10Z" fill="#1c2b33"/></svg>
<div class="t" style="left:1796.0px;top:195.2px;font-size:21px;color:#1c2b33;font-weight:bold;">Jan</div>
<svg style="left:1849px;top:200px;" width="17" height="10" viewBox="0 0 17 10"><path d="M0 0H17L8.5 10Z" fill="#1c2b33"/></svg>
<div class="t" style="left:1914.0px;top:195.2px;font-size:21px;color:#1c2b33;font-weight:bold;letter-spacing:1px">2025</div>
<svg style="left:1985px;top:200px;" width="17" height="10" viewBox="0 0 17 10"><path d="M0 0H17L8.5 10Z" fill="#1c2b33"/></svg>
<div class="t" style="left:1400.0px;transform:translateX(-50%);top:248.9px;font-size:19px;color:#7d8287;font-weight:normal;">Sun</div>
<div class="t" style="left:1793.4px;transform:translateX(-50%);top:248.9px;font-size:19px;color:#7d8287;font-weight:normal;">Sun</div>
<div class="t" style="left:1449.6px;transform:translateX(-50%);top:248.9px;font-size:19px;color:#7d8287;font-weight:normal;">Mon</div>
<div class="t" style="left:1842.8px;transform:translateX(-50%);top:248.9px;font-size:19px;color:#7d8287;font-weight:normal;">Mon</div>
<div class="a" style="left:1425px;top:246px;width:1px;height:26px;background:#e4e5e8"></div>
<div class="a" style="left:1818px;top:246px;width:1px;height:26px;background:#e4e5e8"></div>
<div class="t" style="left:1499.2px;transform:translateX(-50%);top:248.9px;font-size:19px;color:#7d8287;font-weight:normal;">Tues</div>
<div class="t" style="left:1892.2px;transform:translateX(-50%);top:248.9px;font-size:19px;color:#7d8287;font-weight:normal;">Tues</div>
<div class="a" style="left:1474px;top:246px;width:1px;height:26px;background:#e4e5e8"></div>
<div class="a" style="left:1868px;top:246px;width:1px;height:26px;background:#e4e5e8"></div>
<div class="t" style="left:1548.8px;transform:translateX(-50%);top:248.9px;font-size:19px;color:#7d8287;font-weight:normal;">Wed</div>
<div class="t" style="left:1941.6px;transform:translateX(-50%);top:248.9px;font-size:19px;color:#7d8287;font-weight:normal;">Wed</div>
<div class="a" style="left:1524px;top:246px;width:1px;height:26px;background:#e4e5e8"></div>
<div class="a" style="left:1917px;top:246px;width:1px;height:26px;background:#e4e5e8"></div>
<div class="t" style="left:1598.4px;transform:translateX(-50%);top:248.9px;font-size:19px;color:#7d8287;font-weight:normal;">Thurs</div>
<div class="t" style="left:1991.0px;transform:translateX(-50%);top:248.9px;font-size:19px;color:#7d8287;font-weight:normal;">Thurs</div>
<div class="a" style="left:1574px;top:246px;width:1px;height:26px;background:#e4e5e8"></div>
<div class="a" style="left:1966px;top:246px;width:1px;height:26px;background:#e4e5e8"></div>
<div class="t" style="left:1648.0px;transform:translateX(-50%);top:248.9px;font-size:19px;color:#7d8287;font-weight:normal;">Fri</div>
<div class="t" style="left:2040.4px;transform:translateX(-50%);top:248.9px;font-size:19px;color:#7d8287;font-weight:normal;">Fri</div>
<div class="a" style="left:1623px;top:246px;width:1px;height:26px;background:#e4e5e8"></div>
<div class="a" style="left:2016px;top:246px;width:1px;height:26px;background:#e4e5e8"></div>
<div class="t" style="left:1697.6px;transform:translateX(-50%);top:248.9px;font-size:19px;color:#7d8287;font-weight:normal;">Sat</div>
<div class="t" style="left:2089.8px;transform:translateX(-50%);top:248.9px;font-size:19px;color:#7d8287;font-weight:normal;">Sat</div>
<div class="a" style="left:1673px;top:246px;width:1px;height:26px;background:#e4e5e8"></div>
<div class="a" style="left:2065px;top:246px;width:1px;height:26px;background:#e4e5e8"></div>
<div class="a" style="left:1378px;top:279px;width:343px;height:37px;background:#c8dbf2;border-radius:6px"></div>
<div class="a" style="left:1425px;top:279px;width:1px;height:37px;background:rgba(255,255,255,.35)"></div>
<div class="a" style="left:1474px;top:279px;width:1px;height:37px;background:rgba(255,255,255,.35)"></div>
<div class="a" style="left:1524px;top:279px;width:1px;height:37px;background:rgba(255,255,255,.35)"></div>
<div class="a" style="left:1574px;top:279px;width:1px;height:37px;background:rgba(255,255,255,.35)"></div>
<div class="a" style="left:1623px;top:279px;width:1px;height:37px;background:rgba(255,255,255,.35)"></div>
<div class="a" style="left:1673px;top:279px;width:1px;height:37px;background:rgba(255,255,255,.35)"></div>
<div class="a" style="left:1378px;top:326px;width:343px;height:37px;background:#c8dbf2;border-radius:6px"></div>
<div class="a" style="left:1425px;top:326px;width:1px;height:37px;background:rgba(255,255,255,.35)"></div>
<div class="a" style="left:1474px;top:326px;width:1px;height:37px;background:rgba(255,255,255,.35)"></div>
<div class="a" style="left:1524px;top:326px;width:1px;height:37px;background:rgba(255,255,255,.35)"></div>
<div class="a" style="left:1574px;top:326px;width:1px;height:37px;background:rgba(255,255,255,.35)"></div>
<div class="a" style="left:1623px;top:326px;width:1px;height:37px;background:rgba(255,255,255,.35)"></div>
<div class="a" style="left:1673px;top:326px;width:1px;height:37px;background:rgba(255,255,255,.35)"></div>
<div class="a" style="left:1378px;top:372px;width:343px;height:37px;background:#c8dbf2;border-radius:6px"></div>
<div class="a" style="left:1425px;top:372px;width:1px;height:37px;background:rgba(255,255,255,.35)"></div>
<div class="a" style="left:1474px;top:372px;width:1px;height:37px;background:rgba(255,255,255,.35)"></div>
<div class="a" style="left:1524px;top:372px;width:1px;height:37px;background:rgba(255,255,255,.35)"></div>
<div class="a" style="left:1574px;top:372px;width:1px;height:37px;background:rgba(255,255,255,.35)"></div>
<div class="a" style="left:1623px;top:372px;width:1px;height:37px;background:rgba(255,255,255,.35)"></div>
<div class="a" style="left:1673px;top:372px;width:1px;height:37px;background:rgba(255,255,255,.35)"></div>
<div class="a" style="left:1378px;top:418px;width:343px;height:37px;background:#c8dbf2;border-radius:6px"></div>
<div class="a" style="left:1425px;top:418px;width:1px;height:37px;background:rgba(255,255,255,.35)"></div>
<div class="a" style="left:1474px;top:418px;width:1px;height:37px;background:rgba(255,255,255,.35)"></div>
<div class="a" style="left:1524px;top:418px;width:1px;height:37px;background:rgba(255,255,255,.35)"></div>
<div class="a" style="left:1574px;top:418px;width:1px;height:37px;background:rgba(255,255,255,.35)"></div>
<div class="a" style="left:1623px;top:418px;width:1px;height:37px;background:rgba(255,255,255,.35)"></div>
<div class="a" style="left:1673px;top:418px;width:1px;height:37px;background:rgba(255,255,255,.35)"></div>
<div class="a" style="left:1378px;top:465px;width:146px;height:37px;background:#c8dbf2;border-radius:6px"></div>
<div class="a" style="left:1425px;top:465px;width:1px;height:37px;background:rgba(255,255,255,.35)"></div>
<div class="a" style="left:1474px;top:465px;width:1px;height:37px;background:rgba(255,255,255,.35)"></div>
<div class="a" style="left:1381px;top:279px;width:43px;height:37px;background:#3174bf;border-radius:6px"></div>
<div class="a" style="left:1476px;top:465px;width:48px;height:37px;background:#3174bf;border-radius:6px"></div>
<div class="t" style="left:1400.0px;transform:translateX(-50%);top:287.3px;font-size:21px;color:#fff;font-weight:normal;">1</div>
<div class="t" style="left:1449.6px;transform:translateX(-50%);top:287.3px;font-size:21px;color:#2c3237;font-weight:normal;">2</div>
<div class="t" style="left:1499.2px;transform:translateX(-50%);top:287.3px;font-size:21px;color:#2c3237;font-weight:normal;">3</div>
<div class="t" style="left:1548.8px;transform:translateX(-50%);top:287.3px;font-size:21px;color:#2c3237;font-weight:normal;">4</div>
<div class="t" style="left:1598.4px;transform:translateX(-50%);top:287.3px;font-size:21px;color:#2c3237;font-weight:normal;">5</div>
<div class="t" style="left:1648.0px;transform:translateX(-50%);top:287.3px;font-size:21px;color:#2c3237;font-weight:normal;">6</div>
<div class="t" style="left:1697.6px;transform:translateX(-50%);top:287.3px;font-size:21px;color:#2c3237;font-weight:normal;">7</div>
<div class="t" style="left:1400.0px;transform:translateX(-50%);top:333.7px;font-size:21px;color:#2c3237;font-weight:normal;">8</div>
<div class="t" style="left:1449.6px;transform:translateX(-50%);top:333.7px;font-size:21px;color:#2c3237;font-weight:normal;">9</div>
<div class="t" style="left:1499.2px;transform:translateX(-50%);top:333.7px;font-size:21px;color:#2c3237;font-weight:normal;">10</div>
<div class="t" style="left:1548.8px;transform:translateX(-50%);top:333.7px;font-size:21px;color:#2c3237;font-weight:normal;">11</div>
<div class="t" style="left:1598.4px;transform:translateX(-50%);top:333.7px;font-size:21px;color:#2c3237;font-weight:normal;">12</div>
<div class="t" style="left:1648.0px;transform:translateX(-50%);top:333.7px;font-size:21px;color:#2c3237;font-weight:normal;">13</div>
<div class="t" style="left:1697.6px;transform:translateX(-50%);top:333.7px;font-size:21px;color:#2c3237;font-weight:normal;">14</div>
<div class="t" style="left:1400.0px;transform:translateX(-50%);top:379.9px;font-size:21px;color:#2c3237;font-weight:normal;">15</div>
<div class="t" style="left:1449.6px;transform:translateX(-50%);top:379.9px;font-size:21px;color:#2c3237;font-weight:normal;">16</div>
<div class="t" style="left:1499.2px;transform:translateX(-50%);top:379.9px;font-size:21px;color:#2c3237;font-weight:normal;">17</div>
<div class="t" style="left:1548.8px;transform:translateX(-50%);top:379.9px;font-size:21px;color:#2c3237;font-weight:normal;">18</div>
<div class="t" style="left:1598.4px;transform:translateX(-50%);top:379.9px;font-size:21px;color:#2c3237;font-weight:normal;">19</div>
<div class="t" style="left:1648.0px;transform:translateX(-50%);top:379.9px;font-size:21px;color:#2c3237;font-weight:normal;">20</div>
<div class="t" style="left:1697.6px;transform:translateX(-50%);top:379.9px;font-size:21px;color:#2c3237;font-weight:normal;">21</div>
<div class="t" style="left:1400.0px;transform:translateX(-50%);top:426.1px;font-size:21px;color:#2c3237;font-weight:normal;">22</div>
<div class="t" style="left:1449.6px;transform:translateX(-50%);top:426.1px;font-size:21px;color:#2c3237;font-weight:normal;">23</div>
<div class="t" style="left:1499.2px;transform:translateX(-50%);top:426.1px;font-size:21px;color:#2c3237;font-weight:normal;">24</div>
<div class="t" style="left:1548.8px;transform:translateX(-50%);top:426.1px;font-size:21px;color:#2c3237;font-weight:normal;">25</div>
<div class="t" style="left:1598.4px;transform:translateX(-50%);top:426.1px;font-size:21px;color:#2c3237;font-weight:normal;">26</div>
<div class="t" style="left:1648.0px;transform:translateX(-50%);top:426.1px;font-size:21px;color:#2c3237;font-weight:normal;">27</div>
<div class="t" style="left:1697.6px;transform:translateX(-50%);top:426.1px;font-size:21px;color:#2c3237;font-weight:normal;">28</div>
<div class="t" style="left:1400.0px;transform:translateX(-50%);top:472.5px;font-size:21px;color:#2c3237;font-weight:normal;">29</div>
<div class="t" style="left:1449.6px;transform:translateX(-50%);top:472.5px;font-size:21px;color:#2c3237;font-weight:normal;">30</div>
<div class="t" style="left:1499.2px;transform:translateX(-50%);top:472.5px;font-size:21px;color:#fff;font-weight:normal;">31</div>
<div class="t" style="left:1941.6px;transform:translateX(-50%);top:287.3px;font-size:21px;color:#2c3237;font-weight:normal;">1</div>
<div class="t" style="left:1991.0px;transform:translateX(-50%);top:287.3px;font-size:21px;color:#2c3237;font-weight:normal;">2</div>
<div class="t" style="left:2040.4px;transform:translateX(-50%);top:287.3px;font-size:21px;color:#2c3237;font-weight:normal;">3</div>
<div class="t" style="left:2089.8px;transform:translateX(-50%);top:287.3px;font-size:21px;color:#2c3237;font-weight:normal;">4</div>
<div class="t" style="left:1793.4px;transform:translateX(-50%);top:333.7px;font-size:21px;color:#2c3237;font-weight:normal;">5</div>
<div class="t" style="left:1842.8px;transform:translateX(-50%);top:333.7px;font-size:21px;color:#2c3237;font-weight:normal;">6</div>
<div class="t" style="left:1892.2px;transform:translateX(-50%);top:333.7px;font-size:21px;color:#2c3237;font-weight:normal;">7</div>
<div class="t" style="left:1941.6px;transform:translateX(-50%);top:333.7px;font-size:21px;color:#2c3237;font-weight:normal;">8</div>
<div class="t" style="left:1991.0px;transform:translateX(-50%);top:333.7px;font-size:21px;color:#2c3237;font-weight:normal;">9</div>
<div class="t" style="left:2040.4px;transform:translateX(-50%);top:333.7px;font-size:21px;color:#3f7fc6;font-weight:normal;">10</div>
<div class="t" style="left:2089.8px;transform:translateX(-50%);top:333.7px;font-size:21px;color:#2c3237;font-weight:normal;">11</div>
<div class="t" style="left:1793.4px;transform:translateX(-50%);top:379.9px;font-size:21px;color:#9a9ea3;font-weight:normal;">12</div>
<div class="t" style="left:1842.8px;transform:translateX(-50%);top:379.9px;font-size:21px;color:#9a9ea3;font-weight:normal;">13</div>
<div class="t" style="left:1892.2px;transform:translateX(-50%);top:379.9px;font-size:21px;color:#9a9ea3;font-weight:normal;">14</div>
<div class="t" style="left:1941.6px;transform:translateX(-50%);top:379.9px;font-size:21px;color:#9a9ea3;font-weight:normal;">15</div>
<div class="t" style="left:1991.0px;transform:translateX(-50%);top:379.9px;font-size:21px;color:#9a9ea3;font-weight:normal;">16</div>
<div class="t" style="left:2040.4px;transform:translateX(-50%);top:379.9px;font-size:21px;color:#9a9ea3;font-weight:normal;">17</div>
<div class="t" style="left:2089.8px;transform:translateX(-50%);top:379.9px;font-size:21px;color:#9a9ea3;font-weight:normal;">18</div>
<div class="t" style="left:1793.4px;transform:translateX(-50%);top:426.1px;font-size:21px;color:#9a9ea3;font-weight:normal;">19</div>
<div class="t" style="left:1842.8px;transform:translateX(-50%);top:426.1px;font-size:21px;color:#9a9ea3;font-weight:normal;">20</div>
<div class="t" style="left:1892.2px;transform:translateX(-50%);top:426.1px;font-size:21px;color:#9a9ea3;font-weight:normal;">21</div>
<div class="t" style="left:1941.6px;transform:translateX(-50%);top:426.1px;font-size:21px;color:#9a9ea3;font-weight:normal;">22</div>
<div class="t" style="left:1991.0px;transform:translateX(-50%);top:426.1px;font-size:21px;color:#9a9ea3;font-weight:normal;">23</div>
<div class="t" style="left:2040.4px;transform:translateX(-50%);top:426.1px;font-size:21px;color:#9a9ea3;font-weight:normal;">24</div>
<div class="t" style="left:2089.8px;transform:translateX(-50%);top:426.1px;font-size:21px;color:#9a9ea3;font-weight:normal;">25</div>
<div class="t" style="left:1793.4px;transform:translateX(-50%);top:472.5px;font-size:21px;color:#9a9ea3;font-weight:normal;">26</div>
<div class="t" style="left:1842.8px;transform:translateX(-50%);top:472.5px;font-size:21px;color:#9a9ea3;font-weight:normal;">27</div>
<div class="t" style="left:1892.2px;transform:translateX(-50%);top:472.5px;font-size:21px;color:#9a9ea3;font-weight:normal;">28</div>
<div class="t" style="left:1941.6px;transform:translateX(-50%);top:472.5px;font-size:21px;color:#9a9ea3;font-weight:normal;">29</div>
<div class="t" style="left:1991.0px;transform:translateX(-50%);top:472.5px;font-size:21px;color:#9a9ea3;font-weight:normal;">30</div>
<div class="t" style="left:2040.4px;transform:translateX(-50%);top:472.5px;font-size:21px;color:#9a9ea3;font-weight:normal;">31</div>
<div class="a" style="left:1377px;top:573px;width:37px;height:37px;background:#fff;border:1.5px solid #cfd2d6;border-radius:6px"></div>
<div class="t" style="left:1427.0px;top:582.2px;font-size:21px;color:#3b4044;font-weight:normal;">Compare</div>
<div class="a" style="left:1377px;top:637px;width:25px;height:25px;background:#c8dbf2;border-radius:8px"></div>
<div class="a" style="left:1413px;top:623px;width:318px;height:54px;background:#fff;border:1.5px solid #d3d6da;border-radius:7px"></div>
<div class="t" style="left:1430.0px;top:639.2px;font-size:21px;color:#8a8e93;font-weight:normal;">Select an item</div>
<svg style="left:1693px;top:644px;" width="17" height="10" viewBox="0 0 17 10"><path d="M0 0H17L8.5 10Z" fill="#1c2b33"/></svg>
<div class="a" style="left:1744px;top:623px;width:179px;height:54px;background:#fff;border:1.5px solid #d3d6da;border-radius:7px"></div>
<div class="t" style="left:1762.0px;top:639.2px;font-size:21px;color:#2c3237;font-weight:normal;">1 December ...</div>
<div class="t" style="left:1926.0px;top:638.9px;font-size:19px;color:#555;font-weight:normal;">-</div>
<div class="a" style="left:1935px;top:623px;width:179px;height:54px;background:#fff;border:1.5px solid #d3d6da;border-radius:7px"></div>
<div class="t" style="left:1952.0px;top:639.2px;font-size:21px;color:#2c3237;font-weight:normal;">31 December...</div>
<div class="t" style="left:1378.0px;top:746.3px;font-size:18.5px;color:#84888d;font-weight:normal;">Dates are shown in Kolkata Time</div>
<svg style="left:1444px;top:262px;" width="26" height="32" viewBox="0 0 26 32"><path d="M8 2Q10 0 12 2V12Q14 10 16 12Q18 11 19 13Q21 12 22 14V22Q22 28 17 30H11Q8 29 6 26L2 19Q1 17 3 16Q5 15 7 18V3Z" fill="#fff" stroke="#222" stroke-width="1.6" stroke-linejoin="round"/><path d="M12 12V18M16 12V18M19 13V18" stroke="#222" stroke-width="1.2"/></svg>
<svg style="left:1662px;top:716px;overflow:hidden" width="498" height="485" viewBox="0 0 498 485"><defs><linearGradient id="cbgh" x1="0" y1="0" x2="1" y2="0"><stop offset="0" stop-color="#bca8b9"/><stop offset="0.3" stop-color="#c6b3c5"/><stop offset="0.65" stop-color="#d0c3d2"/><stop offset="1" stop-color="#d2c7d3"/></linearGradient><radialGradient id="cbgl" cx="0" cy="1" r="0.45"><stop offset="0" stop-color="#8f8095" stop-opacity=".7"/><stop offset="1" stop-color="#8f8095" stop-opacity="0"/></radialGradient><radialGradient id="cbgr" cx="1" cy="0.85" r="0.75"><stop offset="0" stop-color="#ebe6ee" stop-opacity=".9"/><stop offset="1" stop-color="#ebe6ee" stop-opacity="0"/></radialGradient><radialGradient id="skin" cx="0.45" cy="0.4" r="0.65"><stop offset="0" stop-color="#d3a880"/><stop offset="0.6" stop-color="#c4986f"/><stop offset="1" stop-color="#ad815f"/></radialGradient><linearGradient id="shirt" x1="0" y1="0" x2="0" y2="1"><stop offset="0" stop-color="#d5d9ea"/><stop offset="1" stop-color="#c3c9e0"/></linearGradient><filter id="bl1"><feGaussianBlur stdDeviation="1.2"/></filter><filter id="bl2"><feGaussianBlur stdDeviation="2"/></filter><filter id="bl4"><feGaussianBlur stdDeviation="5"/></filter></defs><rect x="0" y="0" width="498" height="485" fill="url(#cbgh)"/><rect x="0" y="0" width="498" height="485" fill="url(#cbgr)"/><rect x="0" y="0" width="498" height="485" fill="url(#cbgl)"/><rect x="0" y="0" width="498" height="1.5" fill="#e8e4ea"/><rect x="76" y="341" width="28" height="39" rx="2" fill="#e9e5ea"/><path d="M81 353Q88 346 95 353L97 370H80Z" fill="#1e1e22"/><path d="M88 370L81 420" stroke="#2a2a2e" stroke-width="2.5"/><polygon filter="url(#bl1)" points="300.0,331.0 392.0,326.0 472.0,335.0 498.0,372.0 498.0,450.0 334.0,382.0 309.0,345.0" fill="#d8d2c8"/><polygon filter="url(#bl1)" points="306.0,338.0 392.0,333.0 470.0,342.0 490.0,370.0 494.0,442.0 334.0,382.0 309.0,347.0" fill="#2b2d33"/><path d="M392 333V410M330 340L360 390" stroke="#5a5c62" stroke-width="1.5" fill="none"/><polygon filter="url(#bl1)" points="90.0,356.0 110.0,350.0 130.0,390.0 140.0,405.0 92.0,420.0" fill="#687184"/><path d="M92 418Q92 370 108 352" stroke="#c9ccd4" stroke-width="2" fill="none"/><polygon filter="url(#bl1)" points="166.0,423.0 231.0,410.0 277.0,373.0 300.0,343.0 308.0,350.0 304.0,420.0 276.0,455.0 243.0,487.0 202.0,487.0" fill="#a07a5e"/><polygon filter="url(#bl4)" points="250.0,400.0 290.0,355.0 304.0,350.0 300.0,420.0 270.0,440.0" fill="#6a4d3e" opacity=".55"/><polygon filter="url(#bl1)" points="0.0,485.0 0.0,470.0 20.0,452.0 60.0,430.0 118.0,408.0 141.0,406.0 168.0,425.0 202.0,487.0" fill="url(#shirt)"/><polygon filter="url(#bl1)" points="243.0,487.0 276.0,455.0 300.0,425.0 304.0,349.0 310.0,342.0 329.0,379.0 378.0,397.0 420.0,410.0 498.0,445.0 498.0,485.0" fill="url(#shirt)"/><clipPath id="shc"><polygon points="0.0,485.0 0.0,470.0 20.0,452.0 60.0,430.0 118.0,408.0 141.0,406.0 168.0,425.0 202.0,487.0"/><polygon points="243.0,487.0 276.0,455.0 300.0,425.0 304.0,349.0 310.0,342.0 329.0,379.0 378.0,397.0 420.0,410.0 498.0,445.0 498.0,485.0"/></clipPath><g clip-path="url(#shc)"><path d="M-40 486L-15 330" stroke="#9fa9cf" stroke-width="1.3" opacity=".55"/><path d="M-33 486L-8 330" stroke="#9fa9cf" stroke-width="1.3" opacity=".55"/><path d="M-26 486L-1 330" stroke="#9fa9cf" stroke-width="1.3" opacity=".55"/><path d="M-19 486L6 330" stroke="#9fa9cf" stroke-width="1.3" opacity=".55"/><path d="M-12 486L13 330" stroke="#9fa9cf" stroke-width="1.3" opacity=".55"/><path d="M-5 486L20 330" stroke="#9fa9cf" stroke-width="1.3" opacity=".55"/><path d="M2 486L27 330" stroke="#9fa9cf" stroke-width="1.3" opacity=".55"/><path d="M9 486L34 330" stroke="#9fa9cf" stroke-width="1.3" opacity=".55"/><path d="M16 486L41 330" stroke="#9fa9cf" stroke-width="1.3" opacity=".55"/><path d="M23 486L48 330" stroke="#9fa9cf" stroke-width="1.3" opacity=".55"/><path d="M30 486L55 330" stroke="#9fa9cf" stroke-width="1.3" opacity=".55"/><path d="M37 486L62 330" stroke="#9fa9cf" stroke-width="1.3" opacity=".55"/><path d="M44 486L69 330" stroke="#9fa9cf" stroke-width="1.3" opacity=".55"/><path d="M51 486L76 330" stroke="#9fa9cf" stroke-width="1.3" opacity=".55"/><path d="M58 486L83 330" stroke="#9fa9cf" stroke-width="1.3" opacity=".55"/><path d="M65 486L90 330" stroke="#9fa9cf" stroke-width="1.3" opacity=".55"/><path d="M72 486L97 330" stroke="#9fa9cf" stroke-width="1.3" opacity=".55"/><path d="M79 486L104 330" stroke="#9fa9cf" stroke-width="1.3" opacity=".55"/><path d="M86 486L111 330" stroke="#9fa9cf" stroke-width="1.3" opacity=".55"/><path d="M93 486L118 330" stroke="#9fa9cf" stroke-width="1.3" opacity=".55"/><path d="M100 486L125 330" stroke="#9fa9cf" stroke-width="1.3" opacity=".55"/><path d="M107 486L132 330" stroke="#9fa9cf" stroke-width="1.3" opacity=".55"/><path d="M114 486L139 330" stroke="#9fa9cf" stroke-width="1.3" opacity=".55"/><path d="M121 486L146 330" stroke="#9fa9cf" stroke-width="1.3" opacity=".55"/><path d="M128 486L153 330" stroke="#9fa9cf" stroke-width="1.3" opacity=".55"/><path d="M135 486L160 330" stroke="#9fa9cf" stroke-width="1.3" opacity=".55"/><path d="M142 486L167 330" stroke="#9fa9cf" stroke-width="1.3" opacity=".55"/><path d="M149 486L174 330" stroke="#9fa9cf" stroke-width="1.3" opacity=".55"/><path d="M156 486L181 330" stroke="#9fa9cf" stroke-width="1.3" opacity=".55"/><path d="M163 486L188 330" stroke="#9fa9cf" stroke-width="1.3" opacity=".55"/><path d="M170 486L195 330" stroke="#9fa9cf" stroke-width="1.3" opacity=".55"/><path d="M177 486L202 330" stroke="#9fa9cf" stroke-width="1.3" opacity=".55"/><path d="M184 486L209 330" stroke="#9fa9cf" stroke-width="1.3" opacity=".55"/><path d="M191 486L216 330" stroke="#9fa9cf" stroke-width="1.3" opacity=".55"/><path d="M198 486L223 330" stroke="#9fa9cf" stroke-width="1.3" opacity=".55"/><path d="M205 486L230 330" stroke="#9fa9cf" stroke-width="1.3" opacity=".55"/><path d="M212 486L237 330" stroke="#9fa9cf" stroke-width="1.3" opacity=".55"/><path d="M219 486L244 330" stroke="#9fa9cf" stroke-width="1.3" opacity=".55"/><path d="M226 486L251 330" stroke="#9fa9cf" stroke-width="1.3" opacity=".55"/><path d="M233 486L258 330" stroke="#9fa9cf" stroke-width="1.3" opacity=".55"/><path d="M240 486L265 330" stroke="#9fa9cf" stroke-width="1.3" opacity=".55"/><path d="M247 486L272 330" stroke="#9fa9cf" stroke-width="1.3" opacity=".55"/><path d="M254 486L279 330" stroke="#9fa9cf" stroke-width="1.3" opacity=".55"/><path d="M261 486L286 330" stroke="#9fa9cf" stroke-width="1.3" opacity=".55"/><path d="M268 486L293 330" stroke="#9fa9cf" stroke-width="1.3" opacity=".55"/><path d="M275 486L300 330" stroke="#9fa9cf" stroke-width="1.3" opacity=".55"/><path d="M282 486L307 330" stroke="#9fa9cf" stroke-width="1.3" opacity=".55"/><path d="M289 486L314 330" stroke="#9fa9cf" stroke-width="1.3" opacity=".55"/><path d="M296 486L321 330" stroke="#9fa9cf" stroke-width="1.3" opacity=".55"/><path d="M303 486L328 330" stroke="#9fa9cf" stroke-width="1.3" opacity=".55"/><path d="M310 486L335 330" stroke="#9fa9cf" stroke-width="1.3" opacity=".55"/><path d="M317 486L342 330" stroke="#9fa9cf" stroke-width="1.3" opacity=".55"/><path d="M324 486L349 330" stroke="#9fa9cf" stroke-width="1.3" opacity=".55"/><path d="M331 486L356 330" stroke="#9fa9cf" stroke-width="1.3" opacity=".55"/><path d="M338 486L363 330" stroke="#9fa9cf" stroke-width="1.3" opacity=".55"/><path d="M345 486L370 330" stroke="#9fa9cf" stroke-width="1.3" opacity=".55"/><path d="M352 486L377 330" stroke="#9fa9cf" stroke-width="1.3" opacity=".55"/><path d="M359 486L384 330" stroke="#9fa9cf" stroke-width="1.3" opacity=".55"/><path d="M366 486L391 330" stroke="#9fa9cf" stroke-width="1.3" opacity=".55"/><path d="M373 486L398 330" stroke="#9fa9cf" stroke-width="1.3" opacity=".55"/><path d="M380 486L405 330" stroke="#9fa9cf" stroke-width="1.3" opacity=".55"/><path d="M387 486L412 330" stroke="#9fa9cf" stroke-width="1.3" opacity=".55"/><path d="M394 486L419 330" stroke="#9fa9cf" stroke-width="1.3" opacity=".55"/><path d="M401 486L426 330" stroke="#9fa9cf" stroke-width="1.3" opacity=".55"/><path d="M408 486L433 330" stroke="#9fa9cf" stroke-width="1.3" opacity=".55"/><path d="M415 486L440 330" stroke="#9fa9cf" stroke-width="1.3" opacity=".55"/><path d="M422 486L447 330" stroke="#9fa9cf" stroke-width="1.3" opacity=".55"/><path d="M429 486L454 330" stroke="#9fa9cf" stroke-width="1.3" opacity=".55"/><path d="M436 486L461 330" stroke="#9fa9cf" stroke-width="1.3" opacity=".55"/><path d="M443 486L468 330" stroke="#9fa9cf" stroke-width="1.3" opacity=".55"/><path d="M450 486L475 330" stroke="#9fa9cf" stroke-width="1.3" opacity=".55"/><path d="M457 486L482 330" stroke="#9fa9cf" stroke-width="1.3" opacity=".55"/><path d="M464 486L489 330" stroke="#9fa9cf" stroke-width="1.3" opacity=".55"/><path d="M471 486L496 330" stroke="#9fa9cf" stroke-width="1.3" opacity=".55"/><path d="M478 486L503 330" stroke="#9fa9cf" stroke-width="1.3" opacity=".55"/><path d="M485 486L510 330" stroke="#9fa9cf" stroke-width="1.3" opacity=".55"/><path d="M492 486L517 330" stroke="#9fa9cf" stroke-width="1.3" opacity=".55"/><path d="M499 486L524 330" stroke="#9fa9cf" stroke-width="1.3" opacity=".55"/><path d="M506 486L531 330" stroke="#9fa9cf" stroke-width="1.3" opacity=".55"/><path d="M513 486L538 330" stroke="#9fa9cf" stroke-width="1.3" opacity=".55"/></g><polygon filter="url(#bl1)" points="300.0,236.0 326.0,232.0 338.0,250.0 336.0,280.0 318.0,305.0 300.0,311.0" fill="#b08565"/><polygon filter="url(#bl2)" points="90.0,190.0 140.0,130.0 240.0,120.0 300.0,180.0 310.0,240.0 300.0,300.0 280.0,320.0 120.0,320.0" fill="#b48a68"/><polygon filter="url(#bl1)" points="81.0,191.0 88.0,171.0 114.0,150.0 146.0,137.0 190.0,126.0 233.0,128.0 255.0,145.0 281.0,197.0 298.0,238.0 300.0,300.0 295.0,341.0 277.0,373.0 231.0,410.0 173.0,428.0 161.0,426.0 138.0,405.0 108.0,364.0 99.0,325.0 88.0,274.0 83.0,230.0" fill="url(#skin)"/><ellipse filter="url(#bl4)" cx="118" cy="300" rx="22" ry="40" fill="#dcb38e" opacity=".8"/><ellipse filter="url(#bl4)" cx="155" cy="292" rx="20" ry="18" fill="#e0b690" opacity=".9"/><ellipse filter="url(#bl4)" cx="200" cy="160" rx="45" ry="18" fill="#c9a07f" opacity=".5"/><ellipse filter="url(#bl4)" cx="268" cy="310" rx="28" ry="60" fill="#9c7355" opacity=".45"/><path filter="url(#bl1)" d="M71 176C66 150 68 128 80 104C92 84 105 70 122 58C140 44 160 38 185 35C205 32 225 33 245 40C262 36 280 46 300 58C318 70 326 88 330 108C336 130 340 160 339 190C338 210 334 225 326 233C315 240 305 240 298 238C292 215 284 195 276 178C268 160 258 146 243 134C225 124 200 124 175 128C150 132 128 142 112 152C98 160 88 175 81 191C76 188 73 183 71 176Z" fill="#211f22"/><ellipse filter="url(#bl4)" cx="120" cy="95" rx="35" ry="22" fill="#6a686e" opacity=".3"/><ellipse filter="url(#bl4)" cx="175" cy="62" rx="30" ry="12" fill="#5a585e" opacity=".3"/><path d="M84 207Q102 203 122 212M168 205Q195 195 226 199" stroke="#3a2c27" stroke-width="6" fill="none" filter="url(#bl2)"/><ellipse cx="105" cy="245" rx="13" ry="6" fill="#e0d2cc" opacity=".5"/><circle cx="106" cy="245" r="5.5" fill="#4a4448"/><ellipse cx="205" cy="237" rx="15" ry="6.5" fill="#d8d0c0" opacity=".5"/><circle cx="204" cy="237" r="5.5" fill="#2f4a38"/><g fill="none" stroke="#3f3a3c" stroke-width="2.2" filter="url(#bl1)"><polygon points="59.0,215.0 81.0,208.0 118.0,212.0 127.0,225.0 125.0,264.0 110.0,282.0 90.0,283.0 70.0,262.0"/><polygon points="151.0,212.0 179.0,197.0 218.0,199.0 229.0,214.0 229.0,245.0 222.0,264.0 194.0,273.0 166.0,264.0 148.0,238.0"/><path d="M125 227L151 222M228 218L294 226M47 234L60 236"/></g><ellipse cx="150" cy="311" rx="6" ry="3" fill="#6e4a3a" filter="url(#bl1)" opacity=".8"/><ellipse cx="176" cy="309" rx="5" ry="3" fill="#6e4a3a" filter="url(#bl1)" opacity=".6"/><path d="M115 340Q150 322 200 342" stroke="#4a3830" stroke-width="8" fill="none" filter="url(#bl2)" opacity=".85"/><ellipse cx="157" cy="345" rx="29" ry="9" fill="#c7928a" filter="url(#bl1)"/><ellipse cx="159" cy="365" rx="27" ry="12" fill="#d5a7a5" filter="url(#bl1)"/><path d="M134 353Q158 348 184 352" stroke="#5a3a38" stroke-width="4" fill="none" filter="url(#bl1)"/><path d="M138 405Q175 435 231 410Q270 385 290 350" stroke="#3d3029" stroke-width="9" fill="none" filter="url(#bl2)" opacity=".75"/></svg>
</body></html>
